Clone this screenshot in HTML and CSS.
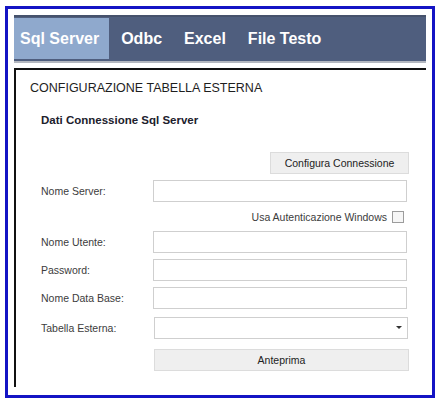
FILE: index.html
```html
<!DOCTYPE html>
<html lang="it">
<head>
    <meta charset="UTF-8">
    <meta name="viewport" content="width=device-width, initial-scale=1.0">
    <title>Configurazione Tabella Esterna</title>
    <link rel="stylesheet" href="styles.css">
</head>
<body>
    <div class="frame">
        <nav class="tabs">
            <a href="#" class="tab active">Sql Server</a>
            <a href="#" class="tab">Odbc</a>
            <a href="#" class="tab">Excel</a>
            <a href="#" class="tab">File Testo</a>
        </nav>

        <section class="panel">
            <h1 class="panel-title">CONFIGURAZIONE TABELLA ESTERNA</h1>

            <div class="form">
                <h2 class="form-title">Dati Connessione Sql Server</h2>

                <div class="actions">
                    <button class="btn btn-config">Configura Connessione</button>
                </div>

                <div class="row">
                    <label for="server">Nome Server:</label>
                    <input type="text" id="server">
                </div>

                <div class="check-row">
                    <label for="win-auth">Usa Autenticazione Windows</label>
                    <input type="checkbox" id="win-auth">
                </div>

                <div class="row">
                    <label for="user">Nome Utente:</label>
                    <input type="text" id="user">
                </div>
                <div class="row">
                    <label for="password">Password:</label>
                    <input type="password" id="password">
                </div>
                <div class="row">
                    <label for="database">Nome Data Base:</label>
                    <input type="text" id="database">
                </div>
                <div class="row row-select">
                    <label for="table">Tabella Esterna:</label>
                    <div class="select">
                        <select id="table">
                            <option value=""></option>
                        </select>
                    </div>
                </div>
                <div class="row row-preview">
                    <span></span>
                    <button class="btn btn-preview">Anteprima</button>
                </div>
            </div>
        </section>
    </div>
</body>
</html>
```

FILE: styles.css
```css
body {
    margin: 6px 0 0 5px;
    font-family: "Liberation Sans", Arial, sans-serif;
    background-color: #fff;
}

.frame {
    box-sizing: border-box;
    width: 430px;
    height: 392px;
    border: 3px solid #1414c4;
    padding: 6px 6px 8px 6px;
    display: flex;
    flex-direction: column;
}

/* tab strip */
.tabs {
    display: flex;
    gap: 6px;
    height: 46px;
    box-sizing: border-box;
    background-color: #4f5e7e;
    border-top: 2px solid #46526c;
    padding: 1px 0 2px 0;
    box-shadow: 0 2px 0 #b3b7bf;
    flex-shrink: 0;
}

.tab {
    display: flex;
    align-items: center;
    padding: 0 10px 0 6px;
    color: #fff;
    text-decoration: none;
    font-weight: bold;
    font-size: 16px;
}

.tab.active {
    background-color: #8fa9cd;
}

/* content panel */
.panel {
    flex: 1;
    margin-top: 7px;
    border-top: 2px solid #111;
    border-left: 2px solid #111;
    padding: 11px 0 0 14px;
}

.panel-title {
    margin: 0;
    font-size: 12.5px;
    line-height: 15px;
    font-weight: normal;
    color: #1e1e1e;
}

.form {
    width: 368px;
    padding-left: 11px;
    font-size: 10.5px;
    color: #3c3c3c;
}

.form-title {
    margin: 17px 0 0 0;
    font-size: 11.5px;
    line-height: 14px;
    color: #20202c;
}

.actions {
    display: flex;
    justify-content: flex-end;
    margin-top: 25px;
}

.btn {
    box-sizing: border-box;
    height: 22px;
    font-family: inherit;
    font-size: 10.5px;
    color: #222;
    background-color: #efefef;
    border: 1px solid #dcdcdc;
    padding: 0;
}

.btn-config {
    width: 139px;
}

.row {
    display: grid;
    grid-template-columns: 112px 256px;
    align-items: center;
    margin-top: 6px;
}

.row label {
    line-height: 22px;
}

.row input {
    box-sizing: border-box;
    width: 254px;
    height: 22px;
    margin: 0;
    border: 1px solid #cfcfcf;
    background: #fff;
}

.check-row {
    display: flex;
    justify-content: flex-end;
    align-items: center;
    gap: 5px;
    height: 29px;
    padding-right: 5px;
}

.check-row + .row {
    margin-top: 0;
}

.check-row input {
    appearance: none;
    box-sizing: border-box;
    width: 12px;
    height: 12px;
    margin: 0;
    border: 1px solid #9c9c9c;
    background: #f6f6f6;
}

.row-select {
    margin-top: 8px;
}

.select {
    position: relative;
    margin-left: 1px;
    width: 254px;
}

.select select {
    appearance: none;
    box-sizing: border-box;
    width: 100%;
    height: 22px;
    margin: 0;
    border: 1px solid #cfcfcf;
    background: #fff;
}

/* dropdown arrow */
.select::after {
    content: "";
    position: absolute;
    right: 6px;
    top: 9px;
    border-left: 3px solid transparent;
    border-right: 3px solid transparent;
    border-top: 3px solid #333;
}

.row-preview {
    margin-top: 10px;
}

.btn-preview {
    margin-left: 1px;
    width: 255px;
}
```
